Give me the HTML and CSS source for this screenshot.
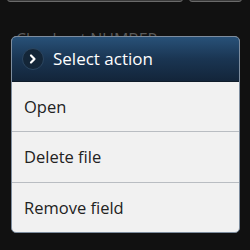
FILE: index.html
```html
<!DOCTYPE html>
<html>
<head>
<meta charset="utf-8">
<link rel="stylesheet" href="styles.css">
</head>
<body>
<div class="screen">
  <div class="buttons">
    <div class="btn btn-wide"></div>
    <div class="btn btn-small"></div>
  </div>
  <div class="behind">Checkout NUMBER</div>
  <div class="dialog">
    <div class="header">
      <span class="icon">
        <svg width="22" height="22" viewBox="0 0 22 22">
          <circle cx="11" cy="11" r="10.5" fill="#142638" stroke="#2c4660" stroke-width="1"/>
          <path d="M9 7.5 L12.5 11 L9 14.5" fill="none" stroke="#fff" stroke-width="2.2" stroke-linecap="round" stroke-linejoin="round"/>
        </svg>
      </span>
      <span class="title">Select action</span>
    </div>
    <ul class="list">
      <li class="item">Open</li>
      <li class="item">Delete file</li>
      <li class="item">Remove field</li>
    </ul>
  </div>
</div>
</body>
</html>
```

FILE: styles.css
```css
html, body {
  margin: 0;
  padding: 0;
  background: #111111;
}
.screen {
  position: relative;
  width: 250px;
  height: 250px;
  overflow: hidden;
  font-family: "Open Sans", "Noto Sans", sans-serif;
}
.buttons {
  display: flex;
  gap: 6px;
  padding-left: 7px;
  margin-top: -19px;
}
.btn {
  height: 21px;
  box-sizing: border-box;
  background: #3a3a3a;
  border: 1px solid #6a6a6a;
  border-radius: 3px;
}
.btn-wide { width: 176px; }
.btn-small { width: 53px; }
.behind {
  margin: 27px 0 0 16px;
  color: #5a5a5a;
  font-size: 16px;
  line-height: 20px;
}
.dialog {
  position: absolute;
  left: 11px;
  top: 36px;
  width: 229px;
  height: 197px;
  box-sizing: border-box;
  border: 1px solid #7e8d9e;
  border-radius: 5px;
  overflow: hidden;
  background: #f1f1f1;
  display: flex;
  flex-direction: column;
}
.header {
  height: 44px;
  flex: none;
  display: flex;
  align-items: center;
  padding-left: 10px;
  gap: 9px;
  background: linear-gradient(#285178, #1a3552 50%, #13253a);
  border-bottom: 1px solid #0f1c2a;
}
.icon {
  display: flex;
  width: 22px;
  height: 22px;
}
.title {
  color: #ffffff;
  font-size: 17px;
  line-height: 22px;
}
.list {
  list-style: none;
  margin: 0;
  padding: 0;
  flex: 1;
  display: flex;
  flex-direction: column;
}
.item {
  flex: 1;
  display: flex;
  align-items: center;
  padding-left: 12px;
  color: #222222;
  font-size: 16.5px;
  border-bottom: 1px solid #b9bdc2;
}
.item:last-child {
  border-bottom: none;
}
```
